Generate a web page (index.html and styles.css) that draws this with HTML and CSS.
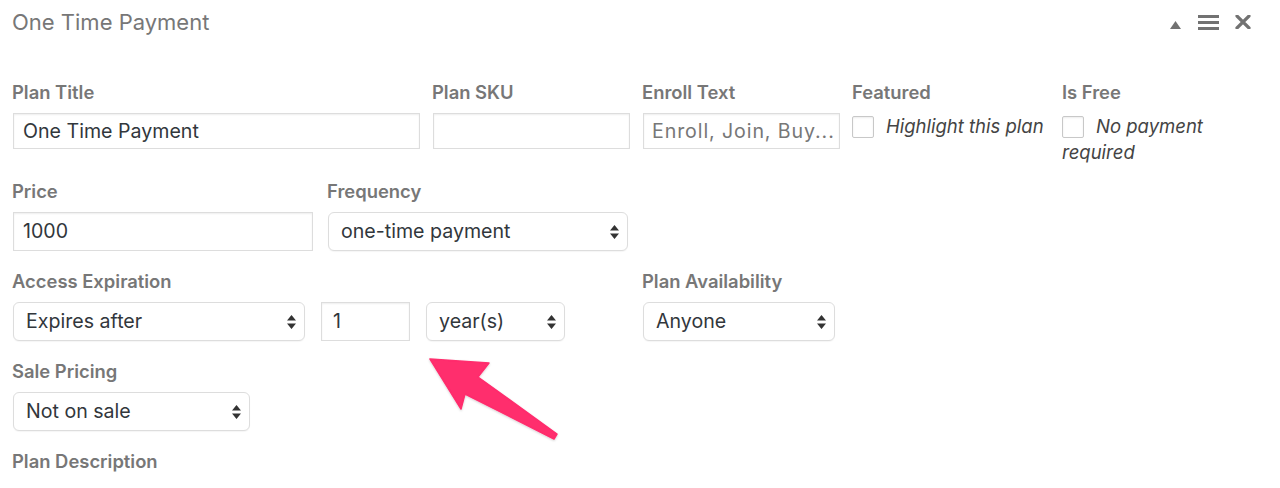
FILE: index.html
```html
<!DOCTYPE html>
<html>
<head>
<meta charset="utf-8">
<link rel="stylesheet" href="styles.css">
</head>
<body>
<div class="panel">
  <div class="header">
    <h2 class="title">One Time Payment</h2>
    <div class="tools">
      <svg class="ico-tri" width="11" height="8" viewBox="0 0 11 8"><path d="M5.5 0 L11 8 L0 8 Z" fill="#727272"/></svg>
      <svg class="ico-menu" width="21" height="15" viewBox="0 0 21 15"><rect x="0" y="0" width="21" height="3" fill="#727272"/><rect x="0" y="6" width="21" height="3" fill="#727272"/><rect x="0" y="12" width="21" height="3" fill="#727272"/></svg>
      <svg class="ico-x" width="16" height="14" viewBox="0 0 16 14"><path d="M2 1 L14 13 M14 1 L2 13" stroke="#727272" stroke-width="3.2" stroke-linecap="round"/></svg>
    </div>
  </div>

  <div class="form">
    <div class="row row1">
      <div class="field f-title">
        <div class="label">Plan Title</div>
        <div class="input w-title">One Time Payment</div>
      </div>
      <div class="field">
        <div class="label">Plan SKU</div>
        <div class="input w-short"></div>
      </div>
      <div class="field">
        <div class="label">Enroll Text</div>
        <div class="input w-short placeholder">Enroll, Join, Buy...</div>
      </div>
      <div class="field">
        <div class="label">Featured</div>
        <div class="check"><span class="box"></span>Highlight this plan</div>
      </div>
      <div class="field f-free">
        <div class="label">Is Free</div>
        <div class="check"><span class="box"></span>No payment required</div>
      </div>
    </div>

    <div class="row row2">
      <div class="field">
        <div class="label">Price</div>
        <div class="input tall w-price">1000</div>
      </div>
      <div class="field">
        <div class="label">Frequency</div>
        <div class="select w-freq"><span>one-time payment</span><svg width="9" height="14" viewBox="0 0 9 14"><path d="M4.5 0 L9 5.5 L0 5.5 Z M0 8.5 L9 8.5 L4.5 14 Z" fill="#333"/></svg></div>
      </div>
    </div>

    <div class="row row3">
      <div class="field">
        <div class="label">Access Expiration</div>
        <div class="inline">
          <div class="select w-exp"><span>Expires after</span><svg width="9" height="14" viewBox="0 0 9 14"><path d="M4.5 0 L9 5.5 L0 5.5 Z M0 8.5 L9 8.5 L4.5 14 Z" fill="#333"/></svg></div>
          <div class="input tall w-num">1</div>
          <div class="select w-unit"><span>year(s)</span><svg width="9" height="14" viewBox="0 0 9 14"><path d="M4.5 0 L9 5.5 L0 5.5 Z M0 8.5 L9 8.5 L4.5 14 Z" fill="#333"/></svg></div>
        </div>
      </div>
      <div class="field">
        <div class="label">Plan Availability</div>
        <div class="select w-avail"><span>Anyone</span><svg width="9" height="14" viewBox="0 0 9 14"><path d="M4.5 0 L9 5.5 L0 5.5 Z M0 8.5 L9 8.5 L4.5 14 Z" fill="#333"/></svg></div>
      </div>
    </div>

    <div class="row row4">
      <div class="field">
        <div class="label">Sale Pricing</div>
        <div class="select w-sale"><span>Not on sale</span><svg width="9" height="14" viewBox="0 0 9 14"><path d="M4.5 0 L9 5.5 L0 5.5 Z M0 8.5 L9 8.5 L4.5 14 Z" fill="#333"/></svg></div>
      </div>
    </div>

    <div class="row row5">
      <div class="field">
        <div class="label">Plan Description</div>
      </div>
    </div>
  </div>

  <svg class="arrow" width="140" height="100" viewBox="420 350 140 100">
    <defs>
      <filter id="sh" x="-20%" y="-20%" width="140%" height="140%">
        <feDropShadow dx="0" dy="1" stdDeviation="1" flood-color="#000" flood-opacity="0.18"/>
      </filter>
    </defs>
    <path d="M430 359 L489 363 L478 377 L557 434 L554 439 L465 394 L461 409 Z" fill="#ff2d6d" stroke="#ff2d6d" stroke-width="1.5" stroke-linejoin="round" filter="url(#sh)"/>
  </svg>
</div>
</body>
</html>
```

FILE: styles.css
```css
* { box-sizing: border-box; }
html, body { margin: 0; padding: 0; background: #fff; }
body {
  font-family: Inter, "Open Sans", "Liberation Sans", sans-serif;
  color: #32373c;
  width: 1280px;
  height: 488px;
  overflow: hidden;
}
.panel { position: relative; padding: 0 0 0 12px; }

.header {
  height: 44px;
  display: flex;
  align-items: center;
  justify-content: space-between;
}
.title {
  margin: 0;
  font-size: 22px;
  font-weight: 400;
  color: #777;
}
.tools {
  display: flex;
  align-items: center;
  margin-right: 29px;
}
.ico-tri { margin-top: 5px; }
.ico-menu { margin-left: 17px; }
.ico-x { margin-left: 16px; }

.form { padding-top: 38px; }
.row { display: flex; align-items: flex-start; }
.row1 { margin-bottom: 16px; }
.row2, .row3, .row4 { margin-bottom: 20px; }

.field { width: 210px; flex: none; }
.f-title { width: 420px; }
.f-free { width: 205px; }
.row2 .field { width: 315px; }
.row3 .field:first-child { width: 630px; }

.label {
  font-size: 18.4px;
  line-height: 20px;
  font-weight: 600;
  color: #777;
  margin-bottom: 11px;
  white-space: nowrap;
}

.input {
  height: 36px;
  border: 1px solid #ddd;
  box-shadow: inset 0 1px 2px rgba(0,0,0,0.07);
  background: #fff;
  font-size: 19.6px;
  line-height: 34px;
  padding: 0 9px;
  color: #32373c;
  margin-left: 1px;
  white-space: nowrap;
  overflow: hidden;
}
.input.tall { height: 39px; line-height: 37px; }
.placeholder { color: #777; letter-spacing: 0.9px; padding-left: 8px; }
.w-title { width: 407px; }
.w-short { width: 197px; }
.w-price { width: 300px; }
.w-num { width: 89px; margin-left: 0; padding: 0 11px; }

.select {
  height: 39px;
  border: 1px solid #ddd;
  border-radius: 6px;
  background: #fff;
  font-size: 19.6px;
  line-height: 37px;
  padding: 0 8px 0 12px;
  color: #32373c;
  display: flex;
  align-items: center;
  justify-content: space-between;
  margin-left: 1px;
  box-shadow: 0 1px 1px rgba(0,0,0,0.04);
  white-space: nowrap;
}
.w-freq { width: 300px; }
.w-exp { width: 292px; }
.w-unit { width: 139px; margin-left: 0; }
.w-avail { width: 192px; }
.w-sale { width: 237px; }

.inline { display: flex; align-items: flex-start; gap: 16px; }

.check {
  font-size: 18.5px;
  line-height: 26px;
  font-style: italic;
  color: #444;
}
.box {
  display: inline-block;
  width: 22px;
  height: 22px;
  border: 1px solid #c8c8c8;
  border-radius: 2px;
  background: #fff;
  vertical-align: -5px;
  margin-right: 12px;
  box-shadow: inset 0 1px 2px rgba(0,0,0,0.08);
}

.arrow {
  position: absolute;
  left: 420px;
  top: 350px;
}
```
